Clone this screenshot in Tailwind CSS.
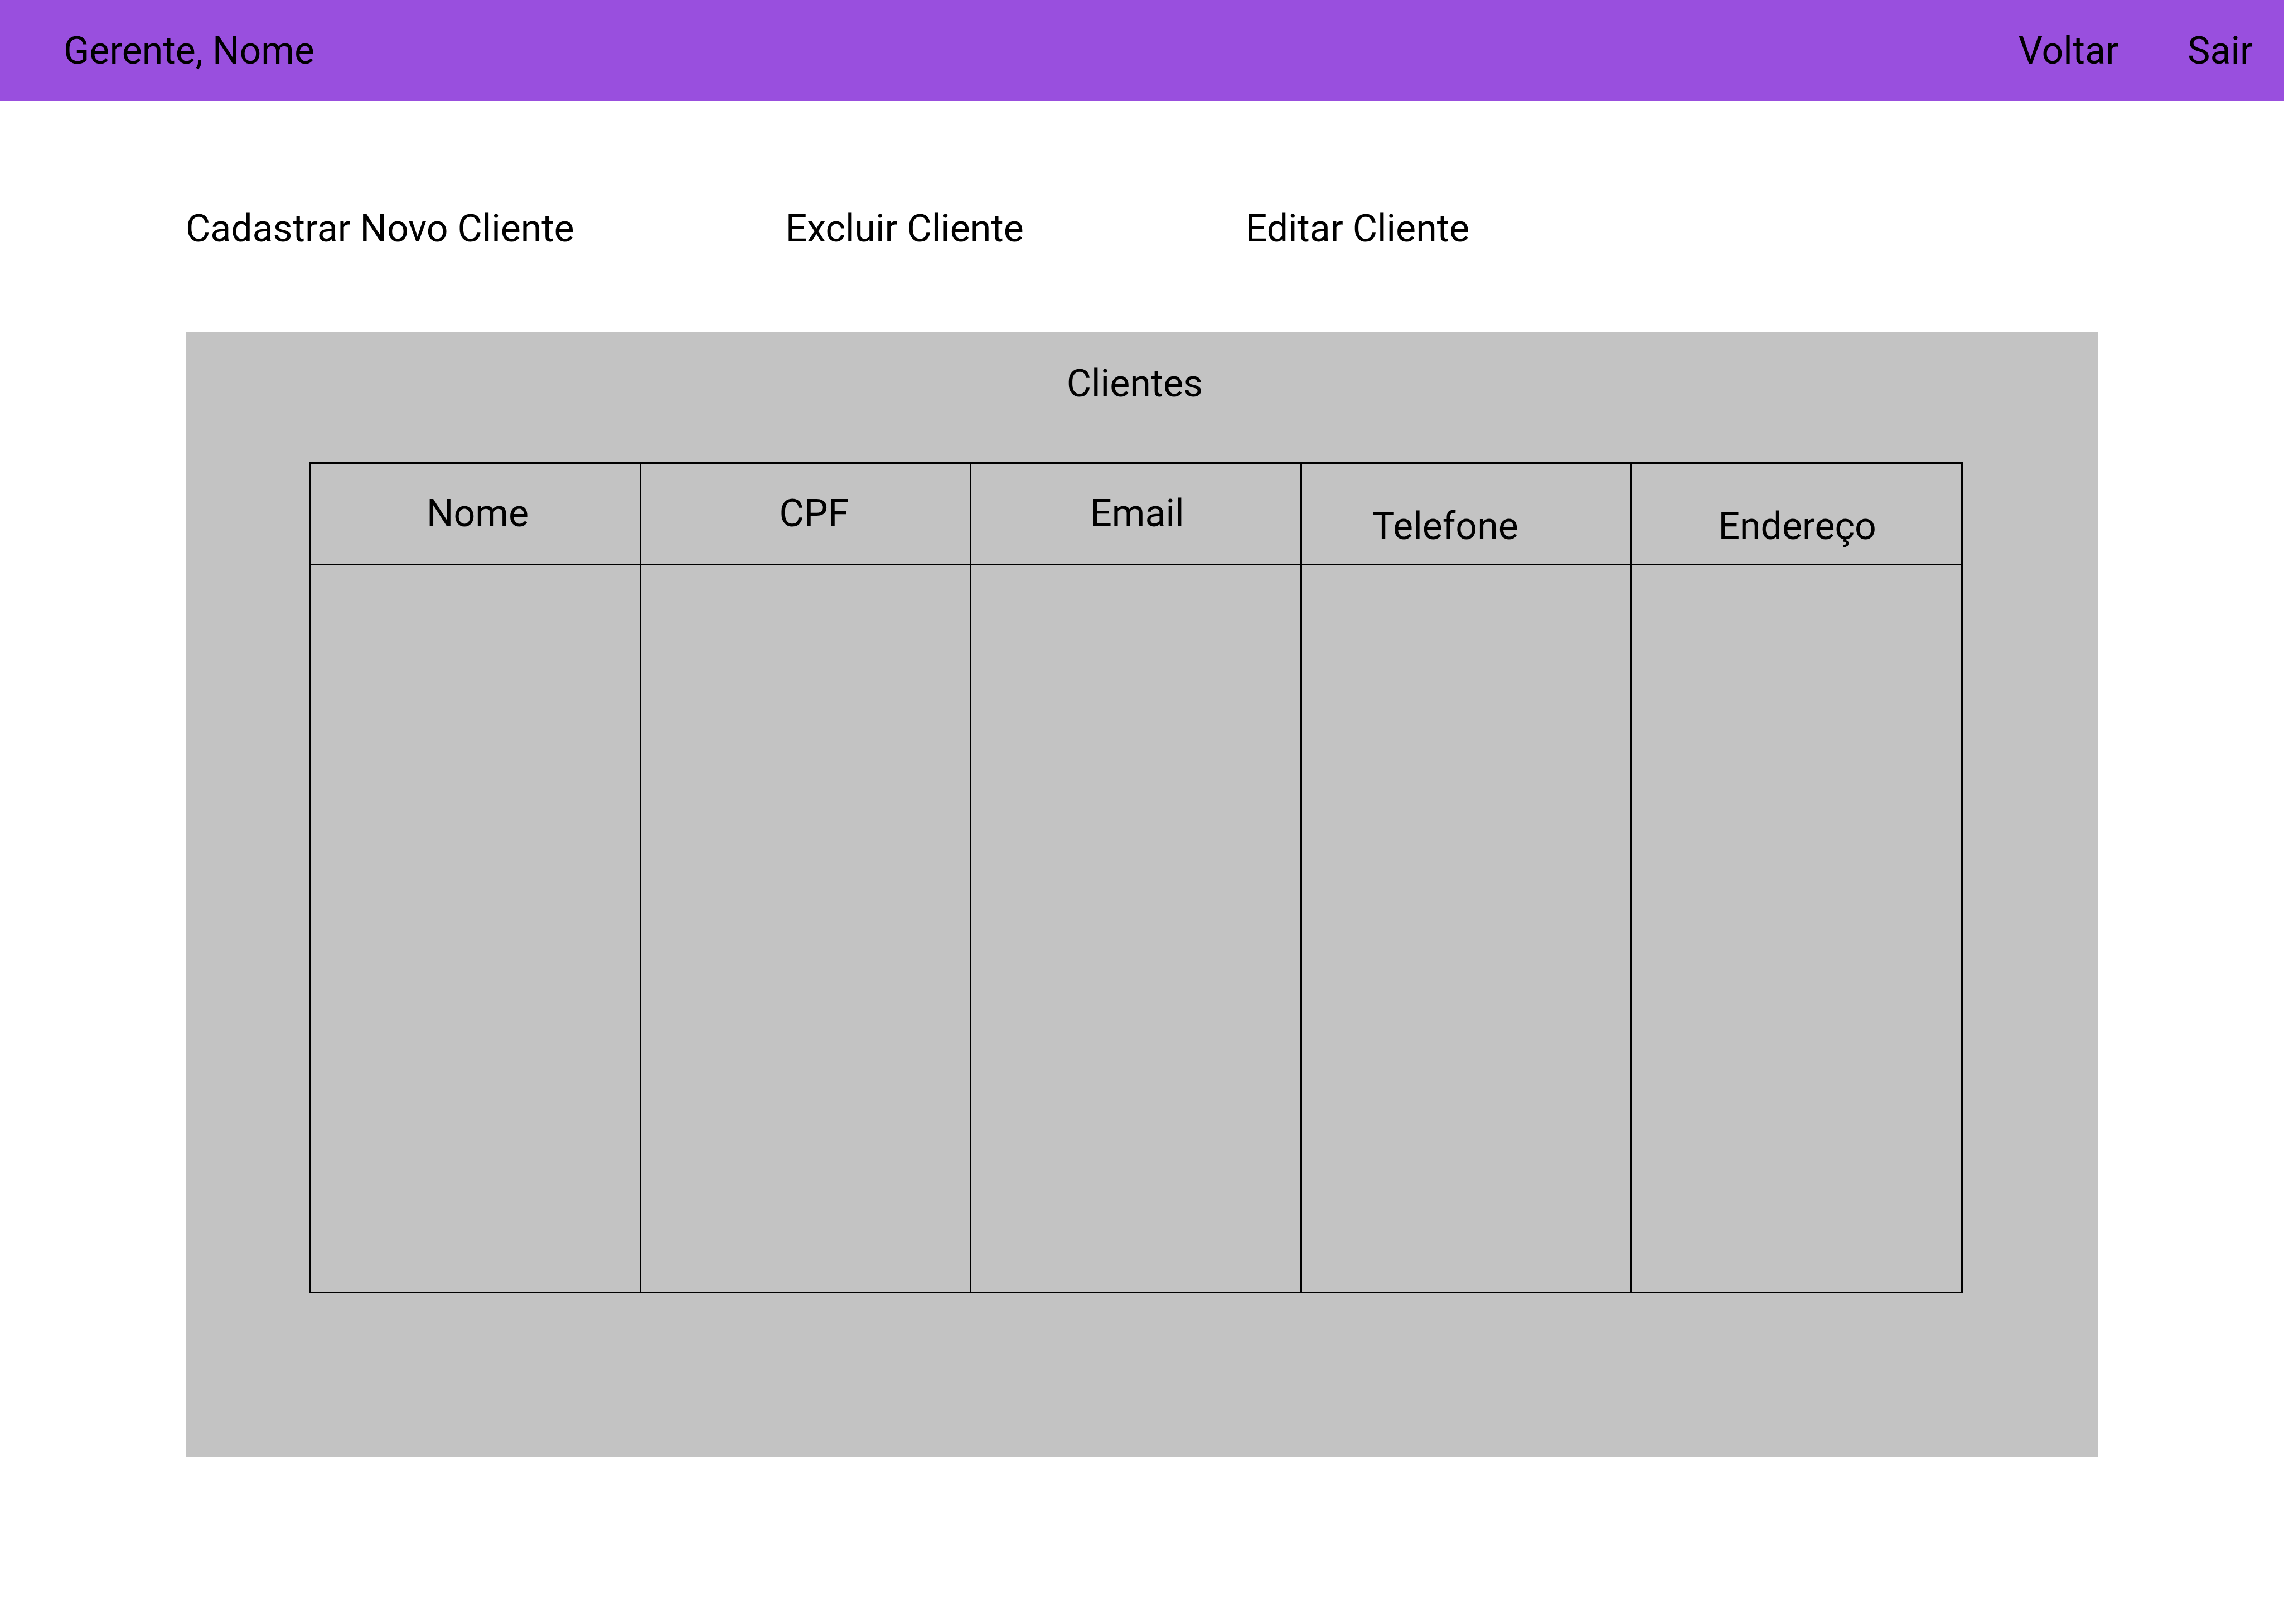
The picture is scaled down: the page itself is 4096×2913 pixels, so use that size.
<!DOCTYPE html>
<html lang="pt-BR">
<head>
<meta charset="utf-8">
<meta name="viewport" content="width=device-width, initial-scale=1">
<title>Clientes</title>
<script src="https://cdn.jsdelivr.net/npm/@tailwindcss/browser@4"></script>
</head>
<body class="min-h-screen bg-white font-[Roboto,sans-serif] text-[68px] leading-[80px] text-black">
  <header class="flex items-center justify-between bg-[#994fde] py-[51px] pr-[56px] pl-[114px]">
    <p>Gerente, Nome</p>
    <nav class="flex gap-[124px]" aria-label="Conta">
      <a href="#voltar">Voltar</a>
      <a href="#sair">Sair</a>
    </nav>
  </header>

  <main class="px-[333px] pt-[188px]">
    <nav class="flex" aria-label="Ações">
      <a href="#cadastrar" class="mr-[379px]">Cadastrar Novo Cliente</a>
      <a href="#excluir" class="mr-[398px]">Excluir Cliente</a>
      <a href="#editar">Editar Cliente</a>
    </nav>

    <section class="mt-[145px] bg-[#c3c3c3] pt-[53px] pr-[243px] pb-[294px] pl-[221px]" aria-labelledby="titulo">
      <h1 id="titulo" class="mb-[101px] pr-1 text-center">Clientes</h1>
      <table class="w-full table-fixed border-separate border-spacing-0 border-r-3 border-b-3 border-black text-left">
        <thead>
          <tr class="h-[182px] align-top">
            <th scope="col" class="border-t-3 border-l-3 border-black pt-[49px] pl-[208px] font-normal">Nome</th>
            <th scope="col" class="border-t-3 border-l-3 border-black pt-[49px] pl-[248px] font-normal">CPF</th>
            <th scope="col" class="border-t-3 border-l-3 border-black pt-[49px] pl-[213px] font-normal">Email</th>
            <th scope="col" class="border-t-3 border-l-3 border-black pt-[72px] pl-[126px] font-normal">Telefone</th>
            <th scope="col" class="border-t-3 border-l-3 border-black pt-[72px] pl-[154px] font-normal">Endereço</th>
          </tr>
        </thead>
        <tbody>
          <tr class="h-[1306px]">
            <td class="border-t-3 border-l-3 border-black"></td>
            <td class="border-t-3 border-l-3 border-black"></td>
            <td class="border-t-3 border-l-3 border-black"></td>
            <td class="border-t-3 border-l-3 border-black"></td>
            <td class="border-t-3 border-l-3 border-black"></td>
          </tr>
        </tbody>
      </table>
    </section>
  </main>
</body>
</html>
